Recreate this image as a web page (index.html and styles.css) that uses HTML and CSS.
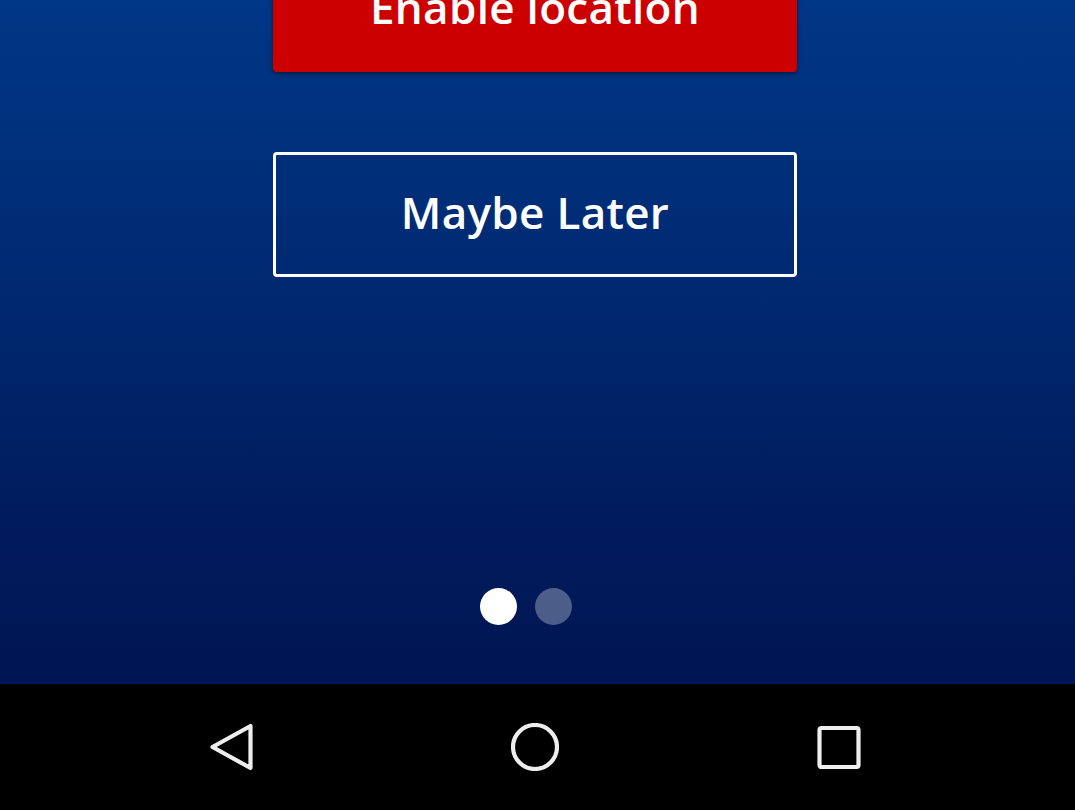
FILE: index.html
```html
<!DOCTYPE html>
<html>
<head>
<meta charset="utf-8">
<link rel="stylesheet" href="styles.css">
</head>
<body>
<div class="screen">
  <main class="content">
    <div class="actions">
      <button class="btn btn-primary">Enable location</button>
      <button class="btn btn-outline">Maybe Later</button>
    </div>
    <div class="dots">
      <span class="dot dot-active"></span>
      <span class="dot"></span>
    </div>
  </main>
  <nav class="navbar">
    <svg class="nav-icon" viewBox="0 0 48 48" width="48" height="48">
      <path d="M5.5 24 L43.5 3 L43.5 45 Z" fill="none" stroke="#eeeeee" stroke-width="4.2" stroke-linejoin="round"/>
    </svg>
    <svg class="nav-icon" viewBox="0 0 48 48" width="48" height="48">
      <circle cx="24" cy="24" r="22" fill="none" stroke="#eeeeee" stroke-width="4.2"/>
    </svg>
    <svg class="nav-icon" viewBox="0 0 48 48" width="48" height="48">
      <rect x="4.5" y="5" width="39" height="39" rx="2" fill="none" stroke="#eeeeee" stroke-width="4.2"/>
    </svg>
  </nav>
</div>
</body>
</html>
```

FILE: styles.css
```css
html, body {
  margin: 0;
  padding: 0;
  height: 100%;
  overflow: hidden;
  background: #000;
}

.screen {
  width: 1075px;
  height: 810px;
  display: flex;
  flex-direction: column;
  font-family: "Open Sans", "Liberation Sans", sans-serif;
}

.content {
  height: 684px;
  background: linear-gradient(to bottom, #003786 0%, #002a72 40%, #001c5e 75%, #001552 100%);
  display: flex;
  flex-direction: column;
  align-items: center;
  overflow: hidden;
}

.actions {
  margin-top: -53px;
  margin-right: 5px;
  display: flex;
  flex-direction: column;
  gap: 80px;
}

.btn {
  width: 524px;
  height: 125px;
  box-sizing: border-box;
  font-family: "Open Sans", "Liberation Sans", sans-serif;
  font-weight: 600;
  font-size: 44px;
  letter-spacing: 0.3px;
  color: #ffffff;
  border-radius: 4px;
  display: flex;
  align-items: center;
  justify-content: center;
  padding: 0 0 6px 0;
  cursor: pointer;
}

.btn-primary {
  background: #cc0000;
  border: none;
  box-shadow: 0 2px 4px rgba(0, 0, 0, 0.45);
}

.btn-outline {
  background: transparent;
  border: 3px solid #ffffff;
}

.dots {
  margin-top: 311px;
  margin-right: 23px;
  display: flex;
  gap: 18px;
}

.dot {
  width: 37px;
  height: 37px;
  border-radius: 50%;
  background: rgba(255, 255, 255, 0.3);
}

.dot-active {
  background: #ffffff;
}

.navbar {
  height: 126px;
  background: #000000;
  display: flex;
  align-items: center;
  justify-content: center;
  gap: 256px;
  padding-right: 5px;
}

.nav-icon {
  display: block;
}
```
